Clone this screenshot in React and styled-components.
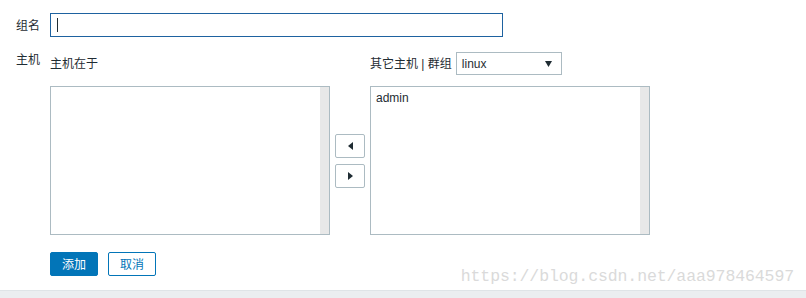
import React from "react";
import styled, { createGlobalStyle } from "styled-components";

const GlobalStyle = createGlobalStyle`
  html, body {
    margin: 0;
    padding: 0;
    background: #ffffff;
  }
  body {
    font-family: "Liberation Sans", "Noto Sans CJK SC", Arial, sans-serif;
    font-size: 12px;
    line-height: 14px;
    color: #1f2c33;
  }
`;

const Page = styled.div`
  position: relative;
  width: 806px;
  height: 298px;
  overflow: hidden;
  display: flex;
  flex-direction: column;
`;

const Form = styled.div`
  flex: 1;
  display: grid;
  grid-template-columns: 50px auto;
  grid-template-rows: 24px 183px 24px;
  row-gap: 15px;
  padding-top: 13px;
`;

const Label = styled.div`
  padding-left: 16px;
  height: ${(p) => (p.$tall ? "24px" : "14px")};
  display: flex;
  align-items: center;
  align-self: start;
  font-family: "Noto Sans CJK SC", sans-serif;
`;

const TextInput = styled.div`
  box-sizing: border-box;
  width: 453px;
  height: 24px;
  border: 1px solid #1e62a0;
  background: #fff;
  display: flex;
  align-items: center;
  padding-left: 6px;
`;

const Caret = styled.span`
  width: 1px;
  height: 14px;
  background: #1f2c33;
`;

const Chooser = styled.div`
  display: grid;
  grid-template-columns: 280px 30px 280px;
  grid-template-rows: 23px 149px;
  column-gap: 5px;
  row-gap: 11px;
`;

const ColumnHead = styled.div`
  display: flex;
  align-items: center;
  gap: 4px;
  grid-column: ${(p) => p.$col};
  height: 23px;
`;

const Select = styled.div`
  box-sizing: border-box;
  width: 106px;
  height: 23px;
  border: 1px solid #acbbc2;
  background: #fff;
  display: flex;
  align-items: center;
  justify-content: space-between;
  padding: 0 9px 0 5px;
`;

const ListBox = styled.div`
  box-sizing: border-box;
  grid-column: ${(p) => p.$col};
  grid-row: 2;
  border: 1px solid #acbbc2;
  background: #fff;
  display: flex;
`;

const ListItems = styled.div`
  flex: 1;
  padding: 4px 5px;
`;

const ScrollTrack = styled.div`
  width: 9px;
  background: #e8e8e8;
`;

const MoveButtons = styled.div`
  grid-column: 2;
  grid-row: 2;
  display: flex;
  flex-direction: column;
  justify-content: center;
  gap: 6px;
`;

const ArrowButton = styled.div`
  box-sizing: border-box;
  width: 30px;
  height: 24px;
  border: 1px solid #acbbc2;
  border-radius: 2px;
  background: #fff;
  display: flex;
  align-items: center;
  justify-content: center;
`;

const Actions = styled.div`
  grid-column: 2;
  display: flex;
  gap: 10px;
  margin-top: 2px;
`;

const Button = styled.div`
  box-sizing: border-box;
  width: 48px;
  height: 24px;
  border-radius: 2px;
  border: 1px solid #0275b8;
  background: ${(p) => (p.$primary ? "#0275b8" : "#ffffff")};
  color: ${(p) => (p.$primary ? "#ffffff" : "#0275b8")};
  display: flex;
  align-items: center;
  justify-content: center;
  font-family: "Noto Sans CJK SC", sans-serif;
  font-size: 12px;
`;

const Watermark = styled.div`
  position: absolute;
  right: 12px;
  top: 268px;
  font-family: "Liberation Mono", monospace;
  font-size: 16.5px;
  line-height: 18px;
  color: #dadada;
  letter-spacing: -0.1px;
`;

const BottomBar = styled.div`
  height: 7px;
  background: #ebeef0;
  border-top: 1px solid #dfe4e7;
`;

const Triangle = ({ dir }) => (
  <svg width="5" height="8" viewBox="0 0 5 8">
    {dir === "left" ? (
      <polygon points="5,0 5,8 0,4" fill="#1f2c33" />
    ) : (
      <polygon points="0,0 0,8 5,4" fill="#1f2c33" />
    )}
  </svg>
);

const SelectArrow = () => (
  <svg width="7" height="6" viewBox="0 0 7 6">
    <polygon points="0,0 7,0 3.5,6" fill="#1f2c33" />
  </svg>
);

export default function App() {
  return (
    <>
      <GlobalStyle />
      <Page>
        <Form>
          <Label $tall>组名</Label>
          <TextInput>
            <Caret />
          </TextInput>

          <Label>主机</Label>
          <Chooser>
            <ColumnHead $col={1}>主机在于</ColumnHead>
            <ColumnHead $col={3}>
              其它主机 | 群组
              <Select>
                linux
                <SelectArrow />
              </Select>
            </ColumnHead>
            <ListBox $col={1}>
              <ListItems />
              <ScrollTrack />
            </ListBox>
            <MoveButtons>
              <ArrowButton>
                <Triangle dir="left" />
              </ArrowButton>
              <ArrowButton>
                <Triangle dir="right" />
              </ArrowButton>
            </MoveButtons>
            <ListBox $col={3}>
              <ListItems>admin</ListItems>
              <ScrollTrack />
            </ListBox>
          </Chooser>

          <Actions>
            <Button $primary>添加</Button>
            <Button>取消</Button>
          </Actions>
        </Form>
        <Watermark>https://blog.csdn.net/aaa978464597</Watermark>
        <BottomBar />
      </Page>
    </>
  );
}
